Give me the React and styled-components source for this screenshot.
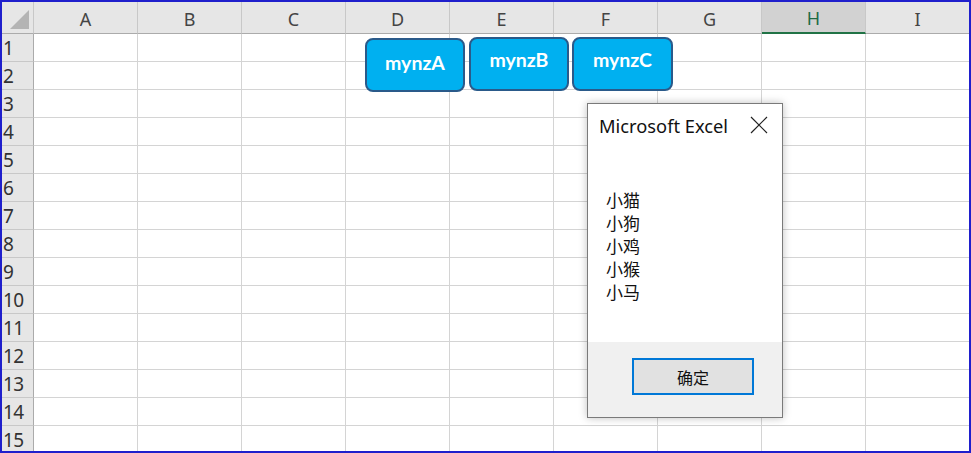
import React from "react";
import styled, { createGlobalStyle } from "styled-components";

const Global = createGlobalStyle`
  html, body { margin: 0; padding: 0; background: #fff; }
  body { font-family: "Noto Sans", "Noto Sans CJK SC", sans-serif; }
`;

const COLS = ["A", "B", "C", "D", "E", "F", "G", "H", "I"];
const ROWS = Array.from({ length: 15 }, (_, i) => i + 1);
const ITEMS = ["小猫", "小狗", "小鸡", "小猴", "小马"];

const Frame = styled.div`
  position: relative;
  width: 971px;
  height: 453px;
  box-sizing: border-box;
  border: 2px solid #1f1fcc;
  overflow: hidden;
  background: #fff;
`;

const Sheet = styled.div`
  display: grid;
  grid-template-columns: 32px repeat(9, 104px);
  grid-template-rows: 32px repeat(15, 28px);
`;

const Corner = styled.div`
  background: #e6e6e6;
  border-right: 1px solid #c8c8c8;
  border-bottom: 1px solid #ababab;
  box-sizing: border-box;
  display: flex;
  align-items: flex-end;
  justify-content: flex-end;
  padding: 0 4px 4px 0;
`;

const Triangle = styled.div`
  width: 0;
  height: 0;
  border-left: 19px solid transparent;
  border-bottom: 19px solid #b4b4b4;
`;

const ColHead = styled.div`
  background: ${(p) => (p.$active ? "#d2d2d2" : "#e6e6e6")};
  color: ${(p) => (p.$active ? "#1e6b45" : "#444")};
  border-right: 1px solid #c8c8c8;
  border-bottom: ${(p) => (p.$active ? "2px solid #217346" : "1px solid #ababab")};
  box-sizing: border-box;
  display: flex;
  align-items: center;
  justify-content: center;
  font-size: 18px;
  padding-top: 2px;
`;

const RowHead = styled.div`
  background: #e6e6e6;
  color: #333;
  border-right: 1px solid #ababab;
  border-bottom: 1px solid #c8c8c8;
  box-sizing: border-box;
  display: flex;
  align-items: center;
  padding-left: 1px;
  font-size: 19px;
  letter-spacing: -0.5px;
`;

const Cell = styled.div`
  border-right: 1px solid #d4d4d4;
  border-bottom: 1px solid #d4d4d4;
  box-sizing: border-box;
`;

const Shape = styled.div`
  position: absolute;
  top: ${(p) => p.$top}px;
  left: ${(p) => p.$left}px;
  width: ${(p) => p.$w}px;
  height: 54px;
  box-sizing: border-box;
  background: #00b0f0;
  border: 2px solid #2a5a8a;
  border-radius: 8px;
  color: #fff;
  font-family: "Lato", "Open Sans", sans-serif;
  font-weight: 700;
  font-size: 19.5px;
  display: flex;
  justify-content: center;
  padding-top: ${(p) => p.$pt}px;
`;

const Dialog = styled.div`
  position: absolute;
  left: 585px;
  top: 101px;
  width: 196px;
  height: 315px;
  box-sizing: border-box;
  border: 1px solid #7a7a7a;
  background: #fff;
  box-shadow: 0 0 8px rgba(0, 0, 0, 0.25);
  display: flex;
  flex-direction: column;
`;

const TitleBar = styled.div`
  display: flex;
  justify-content: space-between;
  align-items: center;
  height: 42px;
  padding: 0 14px 0 11px;
  font-family: "Noto Sans", sans-serif;
  font-size: 18.3px;
  color: #111;
`;

const Body = styled.div`
  flex: 1;
  padding: 42px 0 0 18px;
  font-family: "Noto Sans CJK SC", sans-serif;
  font-size: 17px;
  line-height: 23px;
  color: #111;
`;

const Footer = styled.div`
  height: 75px;
  background: #f0f0f0;
  display: flex;
  justify-content: flex-end;
  padding: 16px 28px 0 0;
  box-sizing: border-box;
`;

const OkButton = styled.button`
  width: 122px;
  height: 37px;
  box-sizing: border-box;
  border: 2px solid #0078d7;
  background: #e1e1e1;
  font-family: "Noto Sans CJK SC", sans-serif;
  font-size: 16px;
  color: #111;
  padding: 0;
`;

export default function App() {
  return (
    <Frame>
      <Global />
      <Sheet>
        <Corner>
          <Triangle />
        </Corner>
        {COLS.map((c) => (
          <ColHead key={c} $active={c === "H"}>
            {c}
          </ColHead>
        ))}
        {ROWS.map((r) => (
          <React.Fragment key={r}>
            <RowHead>{r}</RowHead>
            {COLS.map((c) => (
              <Cell key={c} />
            ))}
          </React.Fragment>
        ))}
      </Sheet>

      <Shape $left={363} $top={36} $w={100} $pt={11}>mynzA</Shape>
      <Shape $left={467} $top={35} $w={100} $pt={9}>mynzB</Shape>
      <Shape $left={570} $top={35} $w={101} $pt={9}>mynzC</Shape>

      <Dialog>
        <TitleBar>
          <span>Microsoft Excel</span>
          <svg width="18" height="18" viewBox="0 0 18 18">
            <path d="M1 1 L17 17 M17 1 L1 17" stroke="#222" strokeWidth="1.2" fill="none" />
          </svg>
        </TitleBar>
        <Body>
          {ITEMS.map((t) => (
            <div key={t}>{t}</div>
          ))}
        </Body>
        <Footer>
          <OkButton>确定</OkButton>
        </Footer>
      </Dialog>
    </Frame>
  );
}
